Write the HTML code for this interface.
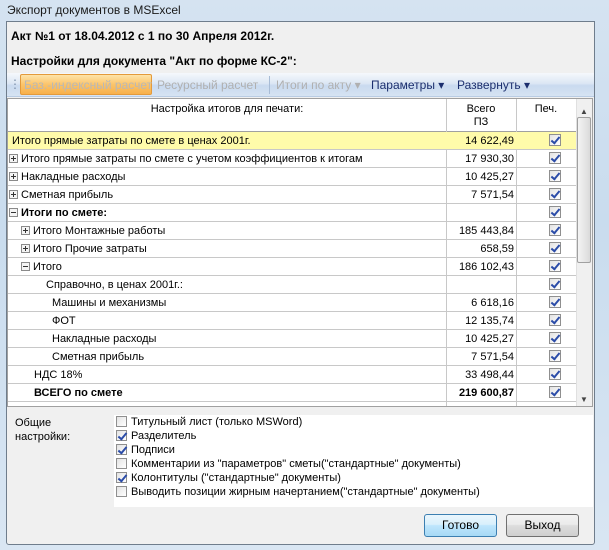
<!DOCTYPE html><html><head><meta charset="utf-8"><style>
*{box-sizing:border-box;margin:0;padding:0}
body{width:609px;height:550px;overflow:hidden;background:linear-gradient(#d5e3f1,#c9dcee 40%,#d9e6f3);font-family:"Liberation Sans",sans-serif;font-size:11px;color:#000;position:relative}
.abs{position:absolute}
.title{left:7px;top:3px;font-size:12px;color:#1a1a1a}
.panel{left:6px;top:21px;width:589px;height:524px;background:#f0f0f0;border:1px solid #6f7d8c;border-radius:0 0 3px 3px}
.b{font-weight:bold;font-size:12px}
.tb{left:7px;top:73px;width:587px;height:24px;background:linear-gradient(#f5f8fc,#dce7f4 45%,#c9daef 55%,#d6e3f2);border-bottom:1px solid #b9cce3}
.tb span{position:absolute;top:5px;font-size:12px}
.grid{left:7px;top:98px;width:586px;height:309px;background:#fff;border:1px solid #a0a0a0;overflow:hidden}
.row{position:absolute;left:0;width:568px;height:18px;border-bottom:1px solid #c8c8c8}
.row .n{position:absolute;top:3px;white-space:nowrap}
.row .v{position:absolute;right:62px;top:3px;width:68px;text-align:right}
.c1{position:absolute;left:438px;top:0;width:1px;height:100%;background:#c8c8c8}
.c2{position:absolute;left:508px;top:0;width:1px;height:100%;background:#c8c8c8}
.cb{position:absolute;width:12px;height:12px;border:1px solid #8f8f8f;background:linear-gradient(135deg,#e3e3e3,#fff)}
.cb.k::after{content:"";position:absolute;left:3px;top:0px;width:3px;height:7px;border:solid #2b4ca8;border-width:0 2px 2px 0;transform:rotate(40deg)}
.row .cb{left:541px;top:2px}
.pm{display:inline-block;width:9px;height:9px;border:1px solid #8a8a8a;position:relative;vertical-align:-1px;margin-right:3px;background:#f4f4f4}
.pm::before{content:"";position:absolute;left:1px;top:3px;width:5px;height:1px;background:#333}
.pm.p::after{content:"";position:absolute;left:3px;top:1px;width:1px;height:5px;background:#333}
.opts{left:114px;top:415px;width:479px;height:92px;background:#fff}
.opt{position:absolute;left:2px;white-space:nowrap}
.opt .cb{position:relative;display:inline-block;vertical-align:-2px;margin-right:4px;width:11px;height:11px}
.btn{position:absolute;top:514px;width:73px;height:23px;border:1px solid #707070;border-radius:3px;background:linear-gradient(#f2f2f2,#ebebeb 45%,#dddddd 50%,#cfcfcf);text-align:center;line-height:21px;font-size:12px}
</style></head><body>
<div class="abs title">Экспорт документов в MSExcel</div>
<div class="abs panel"></div>
<div class="abs b" style="left:11px;top:29px">Акт №1 от 18.04.2012 с 1 по 30 Апреля 2012г.</div>
<div class="abs b" style="left:11px;top:54px">Настройки для документа "Акт по форме КС-2":</div>
<div class="abs tb">
<span style="left:2px;top:4px;color:#7a8ea8">⋮</span>
<div style="position:absolute;left:13px;top:1px;width:132px;height:21px;border:1px solid #e39a3b;border-radius:2px;background:linear-gradient(#fde3a9,#fbc46a 50%,#f8b04a)"></div>
<span style="left:17px;color:#b8b8b8">Баз.-индексный расчет</span>
<span style="left:150px;color:#b0b0b0">Ресурсный расчет</span>
<div style="position:absolute;left:262px;top:3px;width:1px;height:18px;background:#a8bcd6"></div>
<span style="left:269px;color:#b0b0b0">Итоги по акту ▾</span>
<span style="left:364px;color:#1c2f6e">Параметры ▾</span>
<span style="left:450px;color:#1c2f6e">Развернуть ▾</span>
</div>
<div class="abs grid">
<div style="position:absolute;left:0;top:0;width:568px;height:33px;background:#fff;border-bottom:1px solid #a0a0a0"></div>
<div class="c1"></div><div class="c2"></div>
<div style="position:absolute;left:0;top:4px;width:438px;text-align:center">Настройка итогов для печати:</div>
<div style="position:absolute;left:438px;top:4px;width:70px;text-align:center;line-height:13px">Всего<br>ПЗ</div>
<div style="position:absolute;left:508px;top:4px;width:60px;text-align:center">Печ.</div>
<div style="position:absolute;left:568px;top:0;width:17px;height:307px;background:#f0f0f0;border-left:1px solid #e0e0e0"></div>
<div style="position:absolute;left:572px;top:8px;font-size:8px;color:#444">▲</div>
<div style="position:absolute;left:569px;top:18px;width:14px;height:146px;border:1px solid #a0a0a0;border-radius:2px;background:linear-gradient(90deg,#f4f4f4,#dadada)"></div>
<div style="position:absolute;left:572px;top:296px;font-size:8px;color:#444">▼</div>
<div class="row" style="top:33px;background:#fffbaa"><span class="n" style="left:4px">Итого прямые затраты по смете в ценах 2001г.</span><span class="v">14 622,49</span><span class="cb k"></span></div>
<div class="row" style="top:51px"><span class="n" style="left:1px"><i class="pm p"></i>Итого прямые затраты по смете с учетом коэффициентов к итогам</span><span class="v">17 930,30</span><span class="cb k"></span></div>
<div class="row" style="top:69px"><span class="n" style="left:1px"><i class="pm p"></i>Накладные расходы</span><span class="v">10 425,27</span><span class="cb k"></span></div>
<div class="row" style="top:87px"><span class="n" style="left:1px"><i class="pm p"></i>Сметная прибыль</span><span class="v">7 571,54</span><span class="cb k"></span></div>
<div class="row" style="top:105px"><span class="n" style="left:1px;font-weight:bold"><i class="pm"></i>Итоги по смете:</span><span class="v"></span><span class="cb k"></span></div>
<div class="row" style="top:123px"><span class="n" style="left:13px"><i class="pm p"></i>Итого Монтажные работы</span><span class="v">185 443,84</span><span class="cb k"></span></div>
<div class="row" style="top:141px"><span class="n" style="left:13px"><i class="pm p"></i>Итого Прочие затраты</span><span class="v">658,59</span><span class="cb k"></span></div>
<div class="row" style="top:159px"><span class="n" style="left:13px"><i class="pm"></i>Итого</span><span class="v">186 102,43</span><span class="cb k"></span></div>
<div class="row" style="top:177px"><span class="n" style="left:38px">Справочно, в ценах 2001г.:</span><span class="v"></span><span class="cb k"></span></div>
<div class="row" style="top:195px"><span class="n" style="left:44px">Машины и механизмы</span><span class="v">6 618,16</span><span class="cb k"></span></div>
<div class="row" style="top:213px"><span class="n" style="left:44px">ФОТ</span><span class="v">12 135,74</span><span class="cb k"></span></div>
<div class="row" style="top:231px"><span class="n" style="left:44px">Накладные расходы</span><span class="v">10 425,27</span><span class="cb k"></span></div>
<div class="row" style="top:249px"><span class="n" style="left:44px">Сметная прибыль</span><span class="v">7 571,54</span><span class="cb k"></span></div>
<div class="row" style="top:267px"><span class="n" style="left:26px">НДС 18%</span><span class="v">33 498,44</span><span class="cb k"></span></div>
<div class="row" style="top:285px"><span class="n" style="left:26px;font-weight:bold">ВСЕГО по смете</span><span class="v" style="font-weight:bold">219 600,87</span><span class="cb k"></span></div>
</div>
<div class="abs" style="left:15px;top:416px;line-height:14px">Общие<br>настройки:</div>
<div class="abs opts">
<div class="opt" style="top:1px"><span class="cb"></span>Титульный лист (только MSWord)</div>
<div class="opt" style="top:15px"><span class="cb k"></span>Разделитель</div>
<div class="opt" style="top:29px"><span class="cb k"></span>Подписи</div>
<div class="opt" style="top:43px"><span class="cb"></span>Комментарии из "параметров" сметы("стандартные" документы)</div>
<div class="opt" style="top:57px"><span class="cb k"></span>Колонтитулы ("стандартные" документы)</div>
<div class="opt" style="top:71px"><span class="cb"></span>Выводить позиции жирным начертанием("стандартные" документы)</div>
</div>
<div class="btn" style="left:424px;border-color:#3c7fb1;background:linear-gradient(#eaf6fd,#d9f0fc 45%,#bee6fd 50%,#a7d9f5)">Готово</div>
<div class="btn" style="left:506px">Выход</div>
</body></html>
